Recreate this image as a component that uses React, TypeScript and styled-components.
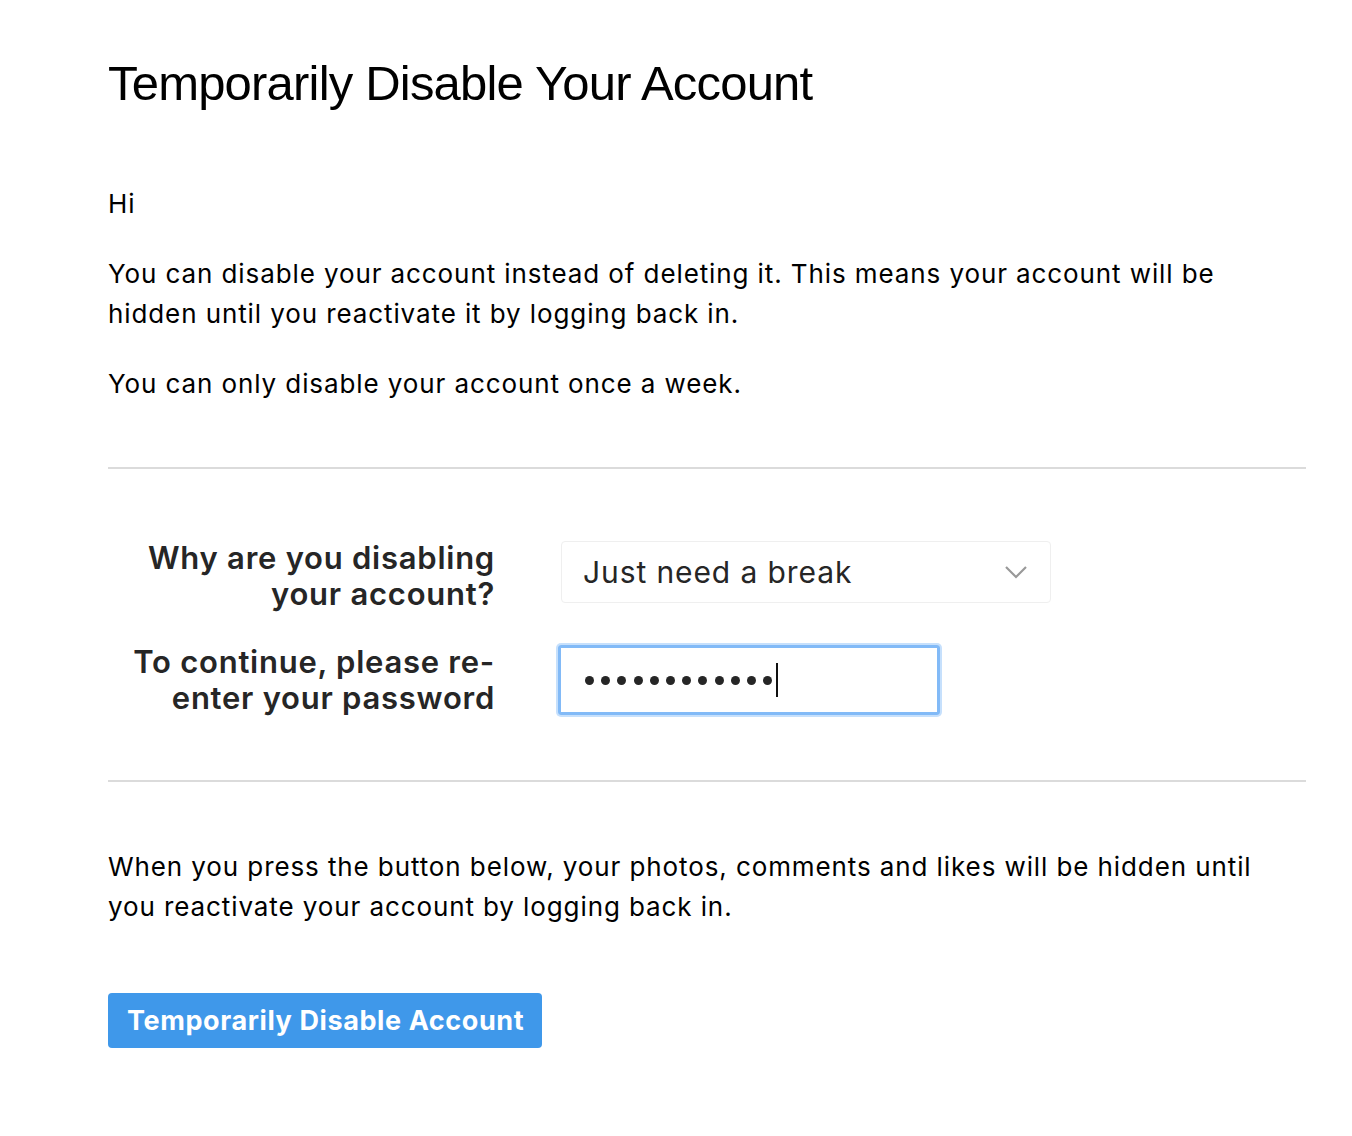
import React, { FC } from 'react';
import styled, { createGlobalStyle } from 'styled-components';

const GlobalStyle = createGlobalStyle`
  html, body {
    margin: 0;
    padding: 0;
    background: #ffffff;
  }
  body {
    font-family: Inter, "Noto Sans", sans-serif;
    color: #000;
  }
`;

const Page = styled.div`
  width: 1198px;
  padding: 53px 0 60px 108px;
`;

const Title = styled.h1`
  margin: 0;
  font-family: "Liberation Sans", Arial, sans-serif;
  font-weight: 400;
  font-size: 49px;
  letter-spacing: -0.8px;
  line-height: 60px;
  color: #000;
`;

const Text = styled.p<{ $gap?: number }>`
  margin: ${(p) => p.$gap ?? 30}px 0 0;
  font-size: 26px;
  letter-spacing: 0.9px;
  line-height: 40px;
  color: #000;
`;

const Divider = styled.hr<{ $top: number }>`
  margin: ${(p) => p.$top}px 0 0;
  border: 0;
  height: 2px;
  background: #dbdbdb;
`;

const Form = styled.div`
  display: grid;
  grid-template-columns: 387px 1fr;
  column-gap: 63px;
  row-gap: 32px;
  align-items: center;
  margin-top: 71px;
`;

const Label = styled.label`
  font-size: 31px;
  letter-spacing: 0.75px;
  line-height: 36px;
  font-weight: 600;
  color: #262626;
  text-align: right;
`;

const Select = styled.div`
  display: flex;
  align-items: center;
  justify-content: space-between;
  box-sizing: border-box;
  width: 490px;
  height: 62px;
  margin: 0 0 8px 3px;
  padding: 0 22px 0 21px;
  border: 1px solid #efefef;
  border-radius: 4px;
  font-size: 30px;
  letter-spacing: 0.9px;
  color: #262626;
`;

const PasswordField = styled.div`
  display: flex;
  align-items: center;
  box-sizing: border-box;
  width: 382px;
  height: 70px;
  padding: 0 24px;
  border: 3px solid #82baf7;
  border-radius: 3px;
  box-shadow: 0 0 0 2px #c6e0fc;
`;

const Dot = styled.span`
  width: 9px;
  height: 9px;
  margin-right: 7.2px;
  border-radius: 50%;
  background: #262626;
`;

const Caret = styled.span`
  display: inline-block;
  width: 2px;
  height: 34px;
  margin-left: -3px;
  background: #111;
`;

const Button = styled.button`
  margin-top: 66px;
  height: 55px;
  padding: 0 18px 0 19px;
  border: 0;
  border-radius: 4px;
  background: #3f98ea;
  color: #fff;
  font-family: Inter, "Noto Sans", sans-serif;
  font-size: 27px;
  letter-spacing: 0.6px;
  font-weight: 700;
  cursor: pointer;
`;

const Chevron: FC = () => (
  <svg width="24" height="14" viewBox="0 0 24 14" fill="none">
    <path d="M2 2l10 10L22 2" stroke="#999" strokeWidth="2.2" />
  </svg>
);

const App: FC = () => {
  return (
    <Page>
      <GlobalStyle />
      <Title>Temporarily Disable Your Account</Title>
      <Text $gap={71}>Hi</Text>
      <Text>
        You can disable your account instead of deleting it. This means your account will be
        hidden until you reactivate it by logging back in.
      </Text>
      <Text>You can only disable your account once a week.</Text>
      <Divider $top={63} />

      <Form>
        <Label>
          Why are you disabling
          <br />
          your account?
        </Label>
        <Select>
          <span>Just need a break</span>
          <Chevron />
        </Select>
        <Label>
          To continue, please re-
          <br />
          enter your password
        </Label>
        <PasswordField>
          {Array.from({ length: 12 }).map((_, i) => (
            <Dot key={i} />
          ))}
          <Caret />
        </PasswordField>
      </Form>

      <Divider $top={64} />
      <Text $gap={65}>
        When you press the button below, your photos, comments and likes will be hidden until
        you reactivate your account by logging back in.
      </Text>
      <Button>Temporarily Disable Account</Button>
    </Page>
  );
};

export default App;
